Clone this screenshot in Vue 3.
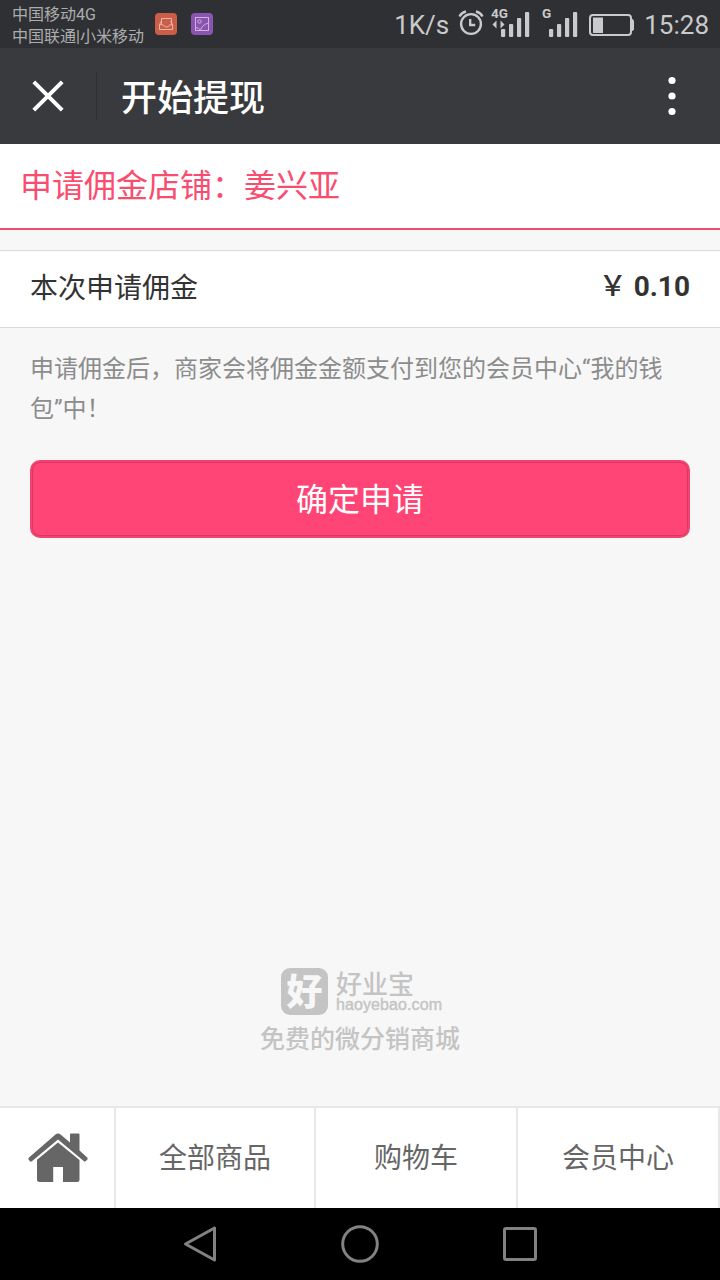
<script setup>
import { ref } from 'vue'

const shop = ref('姜兴亚')
const amount = ref('0.10')

const bars = [
    { x: 0, h: 8 },
    { x: 8, h: 13 },
    { x: 16, h: 19 },
    { x: 24, h: 25 }
]

const menu = ['全部商品', '购物车', '会员中心']
</script>

<template>
    <div class="screen">
        <div class="status">
            <div class="carriers">
                <p>中国移动4G</p>
                <p>中国联通|小米移动</p>
            </div>
            <svg class="app" width="22" height="22" viewBox="0 0 22 22">
                <rect width="22" height="22" rx="4" fill="#cb5d49" />
                <g fill="none" stroke="#e9b5a8" stroke-width="1">
                    <path d="M6.500 12V5.500h10V12M6.500 8l-2 3.500v5h13v-5l-2-3.500" />
                    <path d="M4.500 11.500l4 .5q.5 2 3 2t3-2l3-.5" />
                </g>
            </svg>
            <svg class="app" width="22" height="22" viewBox="0 0 22 22">
                <rect width="22" height="22" rx="4" fill="#8a55b0" />
                <g fill="none" stroke="#cfb2df" stroke-width="1">
                    <rect x="4.500" y="4.500" width="13" height="13" />
                    <path d="M4.500 14.500q3.500 0 5 3M9.500 17.500q1-5.500 8-7.500" />
                    <circle cx="8.500" cy="8.500" r="1.700" />
                </g>
            </svg>
            <div class="status-right">
                <span class="speed">1K/s</span>
                <svg class="alarm" width="26" height="28" viewBox="0 0 26 28" fill="none" stroke="#c9cacb">
                    <circle cx="13" cy="15" r="9.900" stroke-width="2.400" />
                    <path d="M12.200 10v6h5" stroke-width="2.300" />
                    <path d="M1.500 7.500q2-4 6.500-5M24.500 7.500q-2-4-6.500-5" stroke-width="2.400" />
                </svg>
                <svg class="signal" width="39" height="36" viewBox="0 -6 39 36" fill="#c9cacb">
                    <text x="0" y="10" class="net">4G</text>
                    <path d="M1.500 16.500l4-4v8zM13.500 16.500l-4-4v8z" />
                    <rect v-for="b in bars" :key="b.x" :x="b.x + 10" :y="29 - b.h" width="4.200" :height="b.h" rx="1" />
                </svg>
                <svg class="signal second" width="36" height="36" viewBox="0 -6 36 36" fill="#c9cacb">
                    <text x="0" y="10" class="net">G</text>
                    <rect v-for="b in bars" :key="b.x" :x="b.x + 7" :y="29 - b.h" width="4.200" :height="b.h" rx="1" />
                </svg>
                <svg class="battery" width="46" height="22" viewBox="0 0 46 22">
                    <rect x="1" y="1" width="41" height="20" rx="3" fill="none" stroke="#c9cacb" stroke-width="2" />
                    <rect x="4" y="3.500" width="10" height="15.500" fill="#c9cacb" />
                    <path d="M42 5h1.500l1.500 1.500v9l-1.500 1.500h-1.500z" fill="#c9cacb" />
                </svg>
                <span class="time">15:28</span>
            </div>
        </div>

        <header>
            <svg class="close" width="32" height="32" viewBox="0 0 32 32">
                <path d="M1.800 1.800l28.400 28.400M30.200 1.800L1.800 30.200" stroke="#fff" stroke-width="4" />
            </svg>
            <h1>开始提现</h1>
            <svg class="more" width="8" height="40" viewBox="0 0 8 40" fill="#fff">
                <circle cx="4" cy="4.500" r="3.600" />
                <circle cx="4" cy="20" r="3.600" />
                <circle cx="4" cy="35.500" r="3.600" />
            </svg>
        </header>

        <main>
            <h2>申请佣金店铺：{{ shop }}</h2>
            <div class="row">
                <span class="label">本次申请佣金</span>
                <strong><span class="yen">￥</span> {{ amount }}</strong>
            </div>
            <p class="hint">申请佣金后，商家会将佣金金额支付到您的会员中心“我的钱包”中！</p>
            <button>确定申请</button>

            <div class="brand">
                <div class="logo">
                    <div class="mark">好</div>
                    <div class="names">
                        <p class="name">好业宝</p>
                        <p class="site">haoyebao.com</p>
                    </div>
                </div>
                <p class="slogan">免费的微分销商城</p>
            </div>
        </main>

        <footer>
            <div class="home">
                <svg width="60" height="50" viewBox="0 0 60 50" fill="#666">
                    <path d="M2.200 28.500L.5 26.500Q0 25.500 1 24.500L27.500 1.500Q30 -.5 32.500 1.500L42 9.500V1.500Q42 .5 43 .5H50.500Q51.500 .5 51.500 1.500V17.500L59.200 24.500Q60 25.500 59.400 26.500L57.600 28.300Q56.700 28.900 55.700 28L30 6.500L4.200 28Q3.200 29 2.200 28.500Z" />
                    <path d="M9 26.800L30 9.500L51.500 27V46.500Q51.500 49 49 49H35V34H25.200V49H11.500Q9 49 9 46.500Z" />
                </svg>
            </div>
            <div v-for="item in menu" :key="item" class="item">{{ item }}</div>
        </footer>

        <nav>
            <svg width="36" height="38" viewBox="0 0 36 38">
                <path d="M3.500 19L32.500 3V35Z" />
            </svg>
            <svg width="38" height="38" viewBox="0 0 38 38">
                <circle cx="19" cy="19" r="17.300" />
            </svg>
            <svg width="36" height="38" viewBox="0 0 36 38">
                <rect x="2.500" y="3.500" width="31" height="31" rx="1.500" />
            </svg>
        </nav>
    </div>
</template>

<style>
body {
    margin: 0;
    background-color: #f7f7f7;
}
</style>

<style scoped>
.screen {
    width: 720px;
    height: 1280px;
    display: flex;
    flex-direction: column;
    overflow: hidden;
    background-color: #f7f7f7;
    font-family: Roboto, "Noto Sans CJK SC", sans-serif;
}

p,
h1,
h2 {
    margin: 0;
    font-weight: 400;
}

svg {
    display: block;
    flex: none;
}

.status {
    height: 48px;
    display: flex;
    align-items: center;
    background-color: #2f3033;
    color: #c9cacb;
}

.carriers {
    width: 143px;
    padding: 4px 0 0 12px;
    font-size: 16px;
    line-height: 22px;
    color: #acadae;
    white-space: nowrap;
}

.app {
    margin-right: 14px;
}

.status-right {
    margin-left: auto;
    padding-right: 11px;
    display: flex;
    align-items: center;
    font-size: 26px;
    line-height: 30px;
}

.speed,
.time {
    padding-top: 2px;
}

.alarm {
    margin-left: 9px;
    margin-top: -2px;
}

.signal {
    margin-left: 7px;
    margin-top: -8px;
}

.second {
    margin-left: 12px;
}

.net {
    font-size: 13.5px;
    font-weight: 700;
}

.battery {
    margin: 2px 9px 0 11px;
}

header {
    height: 96px;
    display: flex;
    align-items: center;
    background-color: #393a3e;
}

.close {
    margin: 0 32px;
}

h1 {
    flex: 1;
    height: 48px;
    padding-left: 24px;
    border-left: 1px solid #2e2f32;
    color: #fff;
    font-size: 36px;
    font-weight: 500;
    line-height: 55px;
}

.more {
    margin-right: 44px;
}

main {
    flex: 1;
    display: flex;
    flex-direction: column;
}

h2 {
    height: 84px;
    padding-left: 20px;
    background-color: #fff;
    border-bottom: 2px solid #ec4f6c;
    color: #f94d70;
    font-size: 32px;
    line-height: 85px;
}

.row {
    height: 76px;
    margin-top: 20px;
    padding: 0 30px;
    display: flex;
    justify-content: space-between;
    background-color: #fff;
    border-top: 1px solid #d9d9d9;
    border-bottom: 1px solid #d9d9d9;
    color: #333;
    font-size: 28px;
    line-height: 71px;
}

.label {
    line-height: 75px;
}

.yen {
    font-weight: 500;
}

.hint {
    margin: 21px 30px 0;
    color: #8c8c8c;
    font-size: 24px;
    line-height: 40px;
}

button {
    height: 78px;
    margin: 31px 30px 0;
    padding: 2px 0 0;
    border: 2px solid #f04570;
    border-radius: 10px;
    background-color: #ff4575;
    box-shadow: inset 0 0 0 1px #dd3562;
    color: #fff;
    font-family: inherit;
    font-size: 32px;
    line-height: 72px;
}

.brand {
    margin-top: auto;
    padding-bottom: 50px;
    display: flex;
    flex-direction: column;
    align-items: center;
    color: #c4c4c4;
}

.logo {
    margin-left: 3px;
    display: flex;
    gap: 8px;
}

.mark {
    width: 47px;
    height: 47px;
    border-radius: 9px;
    background-color: #c4c4c4;
    color: #f7f7f7;
    font-size: 36px;
    font-weight: 900;
    line-height: 51px;
    text-align: center;
}

.name {
    height: 28px;
    font-size: 26px;
    font-weight: 500;
    line-height: 34px;
}

.site {
    font-family: "Liberation Sans", sans-serif;
    font-size: 16px;
    letter-spacing: 0.1px;
    line-height: 18px;
    -webkit-text-stroke: 0.4px #c4c4c4;
}

.slogan {
    margin-top: 9px;
    font-size: 25px;
    font-weight: 500;
    line-height: 32px;
}

footer {
    height: 100px;
    display: flex;
    background-color: #fff;
    border-top: 2px solid #e8e8e8;
    color: #666;
    font-size: 28px;
    line-height: 101px;
    text-align: center;
}

.home {
    width: 114px;
    padding-top: 25px;
    border-right: 2px solid #e8e8e8;
    line-height: normal;
}

.home svg {
    margin-left: 28px;
}

.item {
    width: 200px;
    border-right: 2px solid #e8e8e8;
}

.item:nth-child(2) {
    width: 198px;
}

nav {
    height: 72px;
    display: flex;
    align-items: center;
    justify-content: center;
    gap: 123px;
    background-color: #000;
    fill: none;
    stroke: #828282;
    stroke-width: 3;
    stroke-linejoin: round;
}
</style>
